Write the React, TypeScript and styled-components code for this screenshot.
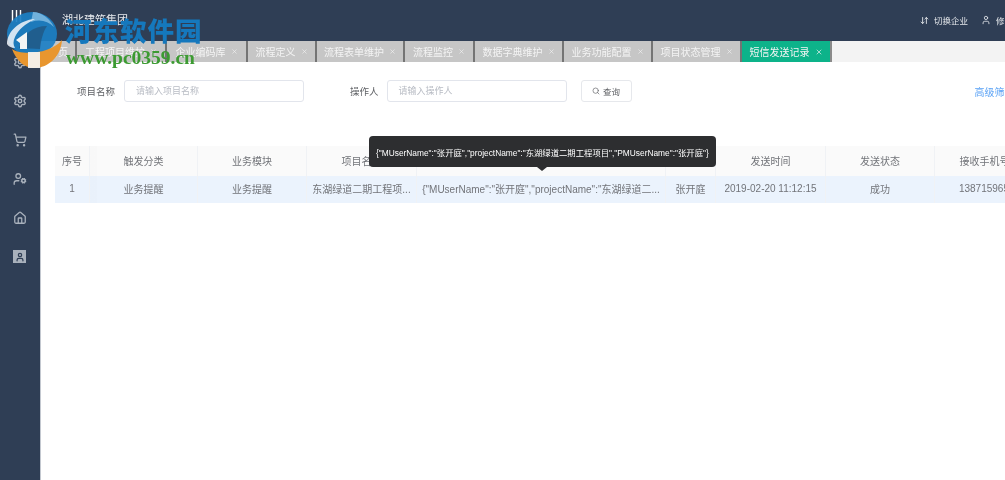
import React from "react";
import styled, { createGlobalStyle } from "styled-components";
import { ArrowDownUp, Home, Search, Settings, ShoppingCart, User, UserCog, X } from "lucide-react";

const Global = createGlobalStyle`
  html, body { margin: 0; padding: 0; background: #fff; overflow: hidden; }
  * { box-sizing: border-box; }
  svg { flex: none; }
`;

const Page = styled.div`
  position: relative;
  width: 1005px;
  height: 480px;
  overflow: hidden;
  display: flex;
  flex-direction: column;
  font-family: "Liberation Sans", "Noto Sans CJK SC", sans-serif;
  font-size: 10px;
  color: #606266;
  filter: blur(0.5px);
`;

const Header = styled.header`
  flex: 0 0 41px;
  background: #2f3e55;
  display: flex;
  align-items: center;
  color: #e3e6ea;
`;

const Brand = styled.div`
  width: 62px;
  padding-left: 11px;
  display: flex;
  align-items: center;
`;

const Title = styled.div`
  font-size: 11px;
  color: #e8ebef;
  margin-top: -4px;
`;

const HeaderRight = styled.div`
  margin-left: auto;
  width: 85px;
  display: flex;
  align-items: center;
  white-space: nowrap;
  overflow: hidden;
  font-size: 8.5px;
  margin-top: -1px;
`;

const HeaderLabel = styled.span`
  margin-left: 5px;
  margin-right: 13px;
`;

const Body = styled.div`
  flex: 1;
  display: flex;
  min-height: 0;
`;

const Sidebar = styled.aside`
  flex: 0 0 41px;
  background: #2f3e55;
  border-right: 1px solid #c3c8d0;
  display: flex;
  flex-direction: column;
  align-items: center;
  padding: 13px 1px 0 0;
  gap: 23px;
  color: #a9b1bc;
`;

const SideItem = styled.div`
  width: 16px;
  height: 16px;
  display: flex;
  align-items: center;
  justify-content: center;
`;

const SideBoxed = styled(SideItem)`
  width: 13px;
  height: 13px;
  margin-top: 1px;
  background: #a9b1bc;
  color: #2f3e55;
`;

const Main = styled.main`
  flex: 1;
  min-width: 0;
  background: #fff;
`;

const TabBar = styled.nav`
  height: 21px;
  display: flex;
  background: #f3f3f3;
`;

const Tab = styled.div<{ $w: number; $active?: boolean }>`
  flex: 0 0 ${(p) => p.$w}px;
  display: flex;
  align-items: center;
  justify-content: center;
  gap: 5px;
  white-space: nowrap;
  overflow: hidden;
  font-size: 10px;
  color: #f4f4f4;
  background: ${(p) => (p.$active ? "#0db38a" : "#c6c6c6")};
  border-right: 2px solid ${(p) => (p.$active ? "#8a8a8a" : "#747474")};
`;

const Filters = styled.form`
  height: 22px;
  margin-top: 18px;
  display: flex;
  align-items: center;
  white-space: nowrap;
`;

const Label = styled.label<{ $left: number; $gap: number }>`
  flex: none;
  margin-left: ${(p) => p.$left}px;
  margin-right: ${(p) => p.$gap}px;
  font-size: 9.5px;
  color: #606266;
`;

const Field = styled.div`
  flex: 0 0 180px;
  height: 22px;
  border: 1px solid #e2e5ec;
  border-radius: 3px;
  padding-left: 11px;
  font-size: 9px;
  line-height: 20px;
  color: #b8bcc4;
`;

const QueryButton = styled.button`
  flex: 0 0 51px;
  margin-left: 14px;
  height: 22px;
  border: 1px solid #e6e8ec;
  border-radius: 3px;
  background: #fff;
  display: flex;
  align-items: center;
  justify-content: center;
  gap: 3px;
  padding: 0;
  font: inherit;
  font-size: 8.5px;
  color: #606266;
`;

const MoreLink = styled.a`
  flex: none;
  margin-left: 343px;
  font-size: 10px;
  color: #5aa2f5;
`;

const TableWrap = styled.div`
  margin: 44px 0 0 14px;
  width: 990px;
  overflow: hidden;
`;

const Row = styled.div<{ $head?: boolean }>`
  width: 990px;
  display: grid;
  grid-template-columns: 35px 108px 109px 110px 249px 50px 110px 109px 110px;
  height: ${(p) => (p.$head ? 30 : 27)}px;
  background: ${(p) => (p.$head ? "#fafafa" : "#ebf3fd")};
`;

const Cell = styled.div<{ $head?: boolean }>`
  display: flex;
  align-items: center;
  justify-content: center;
  padding: 0 4px ${(p) => (p.$head ? 1 : 2)}px;
  min-width: 0;
  border-right: 1px solid #f0f2f5;
  font-size: 10px;
  color: #727479;
  white-space: nowrap;
  overflow: hidden;
  &:nth-child(2) {
    background: linear-gradient(to right, rgba(0, 0, 0, 0.006) 7px, transparent 7px);
  }
`;

const Tooltip = styled.div`
  position: absolute;
  left: 369px;
  top: 136px;
  width: 347px;
  height: 31px;
  background: #2d2e30;
  border-radius: 4px;
  color: #fff;
  font-size: 8.35px;
  display: flex;
  align-items: center;
  padding-left: 7px;
  white-space: nowrap;
  &::after {
    content: "";
    position: absolute;
    left: 168px;
    bottom: -4px;
    border-left: 5px solid transparent;
    border-right: 5px solid transparent;
    border-top: 4px solid #2d2e30;
  }
`;

const Watermark = styled.div`
  position: absolute;
  left: 5px;
  top: 12px;
  width: 200px;
  height: 56px;
`;

const WatermarkLogo = styled.svg`
  position: absolute;
  left: 0;
  top: 0;
`;

const WatermarkName = styled.div`
  position: absolute;
  left: 60px;
  top: 2px;
  font-family: "Noto Sans CJK SC", "DejaVu Serif", serif;
  font-size: 26.5px;
  font-weight: 900;
  line-height: 32px;
  letter-spacing: 1px;
  color: #1578bd;
  white-space: nowrap;
`;

const WatermarkUrl = styled.div`
  position: absolute;
  left: 61px;
  top: 36px;
  font-family: "Liberation Serif", serif;
  font-size: 19.5px;
  font-weight: 700;
  line-height: 20px;
  color: #3c9a32;
  white-space: nowrap;
`;

const tabs: [string, number][] = [
  ["首页", 36],
  ["工程项目维护", 90],
  ["企业编码库", 81],
  ["流程定义", 69],
  ["流程表单维护", 88],
  ["流程监控", 70],
  ["数据字典维护", 89],
  ["业务功能配置", 89],
  ["项目状态管理", 89],
];

const json = '{"MUserName":"张开庭","projectName":"东湖绿道二期工程项目","PMUserName":"张开庭"}';

const heads = ["序号", "触发分类", "业务模块", "项目名称", "短信内容", "接收人", "发送时间", "发送状态", "接收手机号码"];
const cells = [
  "1",
  "业务提醒",
  "业务提醒",
  "东湖绿道二期工程项...",
  '{"MUserName":"张开庭","projectName":"东湖绿道二...',
  "张开庭",
  "2019-02-20 11:12:15",
  "成功",
  "13871596585",
];

export default function App() {
  return (
    <Page>
      <Global />
      <Header>
        <Brand>
          <svg width="12" height="15" viewBox="0 0 12 15" fill="none" stroke="#fff" strokeWidth="1.4" style={{ marginTop: -8 }}>
            <path d="M1.5 1v12M5.5 1v12M9.5 1v12" />
          </svg>
        </Brand>
        <Title>湖北建筑集团</Title>
        <HeaderRight>
          <ArrowDownUp size={9} strokeWidth={2.4} />
          <HeaderLabel>切换企业</HeaderLabel>
          <User size={10} strokeWidth={2} />
          <HeaderLabel>修改密码</HeaderLabel>
        </HeaderRight>
      </Header>
      <Body>
        <Sidebar>
          <SideItem><Settings size={14} strokeWidth={2.4} /></SideItem>
          <SideItem><Settings size={14} strokeWidth={2.4} /></SideItem>
          <SideItem><ShoppingCart size={14} strokeWidth={2.2} /></SideItem>
          <SideItem><UserCog size={14} strokeWidth={2.2} /></SideItem>
          <SideItem><Home size={14} strokeWidth={2.2} /></SideItem>
          <SideBoxed><User size={10} strokeWidth={3} /></SideBoxed>
        </Sidebar>
        <Main>
          <TabBar>
            {tabs.map(([name, w], i) => (
              <Tab key={name} $w={w}>
                {name}
                {i > 0 && <X size={7} />}
              </Tab>
            ))}
            <Tab $w={90} $active>
              短信发送记录
              <X size={8} />
            </Tab>
          </TabBar>
          <Filters>
            <Label $left={36} $gap={9}>项目名称</Label>
            <Field>请输入项目名称</Field>
            <Label $left={46} $gap={8}>操作人</Label>
            <Field>请输入操作人</Field>
            <QueryButton type="button">
              <Search size={8} />
              查询
            </QueryButton>
            <MoreLink>高级筛选</MoreLink>
          </Filters>
          <TableWrap>
            <Row $head>
              {heads.map((h) => (
                <Cell key={h} $head>{h}</Cell>
              ))}
            </Row>
            <Row>
              {cells.map((c, i) => (
                <Cell key={i}>{c}</Cell>
              ))}
            </Row>
          </TableWrap>
        </Main>
      </Body>
      <Tooltip>{json}</Tooltip>
      <Watermark>
        <WatermarkLogo width="60" height="58" viewBox="0 0 60 58">
          <ellipse cx="27" cy="22" rx="25" ry="22" fill="#1c7fc4" opacity="0.92" />
          <path d="M26 10c9-3 17-1 23 5C45 7 37 0 28 0z" fill="#9ed0ee" opacity="0.65" />
          <path d="M14 36C18 22 28 14 42 14c-4 6-6 14-7 23z" fill="#22557f" opacity="0.75" />
          <path d="M2 32C2 20 14 8 30 7 20 12 13 18 10 25c-2 4-2 8 0 11-4 0-7-2-8-4z" fill="#f2f6fa" opacity="0.85" />
          <path d="M11 28l11-8v17h-7v-6z" fill="#f5f5f5" />
          <path d="M7 37C14 43 45 43 57 28 56 44 44 56 29 56 19 56 11 48 7 37z" fill="#e8962f" />
          <rect x="23" y="40" width="12" height="16" fill="#f4f4f4" opacity="0.92" />
        </WatermarkLogo>
        <WatermarkName>河东软件园</WatermarkName>
        <WatermarkUrl>www.pc0359.cn</WatermarkUrl>
      </Watermark>
    </Page>
  );
}
